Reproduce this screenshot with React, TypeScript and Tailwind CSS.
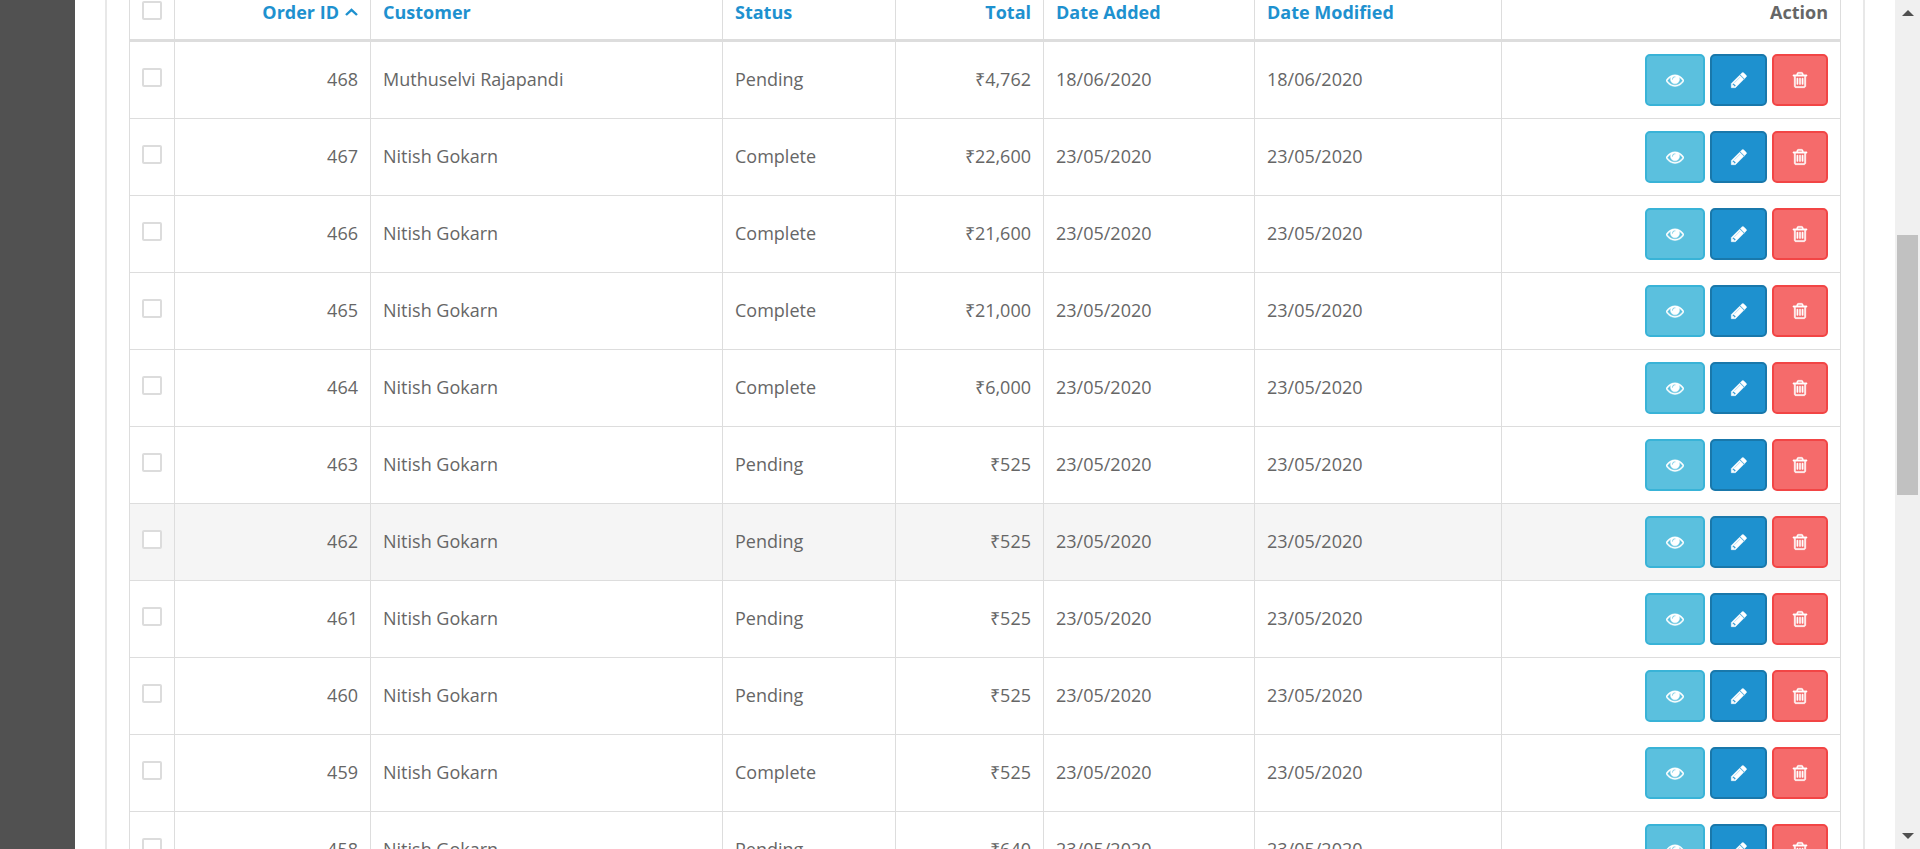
type Order = {
  id: number;
  customer: string;
  status: string;
  total: string;
  added: string;
  modified: string;
};

const nitish = (id: number, status: string, total: string): Order => ({
  id,
  customer: "Nitish Gokarn",
  status,
  total,
  added: "23/05/2020",
  modified: "23/05/2020",
});

const orders: Order[] = [
  {
    id: 468,
    customer: "Muthuselvi Rajapandi",
    status: "Pending",
    total: "₹4,762",
    added: "18/06/2020",
    modified: "18/06/2020",
  },
  nitish(467, "Complete", "₹22,600"),
  nitish(466, "Complete", "₹21,600"),
  nitish(465, "Complete", "₹21,000"),
  nitish(464, "Complete", "₹6,000"),
  nitish(463, "Pending", "₹525"),
  nitish(462, "Pending", "₹525"),
  nitish(461, "Pending", "₹525"),
  nitish(460, "Pending", "₹525"),
  nitish(459, "Complete", "₹525"),
  nitish(458, "Pending", "₹640"),
];

const activeOrder = 462;

const eyePath =
  "M1664 960q-152-236-381-353 61 104 61 225 0 185-131.5 316.5t-316.5 131.5-316.5-131.5-131.5-316.5q0-121 61-225-229 117-381 353 133 205 333.5 326.5t434.5 121.5 434.5-121.5 333.5-326.5zm-720-384q0-20-14-34t-34-14q-125 0-214.5 89.5t-89.5 214.5q0 20 14 34t34 14 34-14 14-34q0-86 61-147t147-61q20 0 34-14t14-34zm848 384q0 34-20 69-140 230-376.5 368.5t-499.5 138.5-499.5-139-376.5-368q-20-35-20-69t20-69q140-229 376.5-368t499.5-139 499.5 139 376.5 368q20 35 20 69z";
const pencilPath =
  "M491 1536l91-91-235-235-91 91v107h128v128h107zm523-928q0-22-22-22-10 0-17 7l-542 542q-7 7-7 17 0 22 22 22 10 0 17-7l542-542q7-7 7-17zm-54-192l416 416-832 832h-416v-416zm683 96q0 53-37 90l-166 166-416-416 166-165q36-38 90-38 53 0 91 38l235 234q37 39 37 91z";
const trashPath =
  "M704 736v576q0 14-9 23t-23 9h-64q-14 0-23-9t-9-23v-576q0-14 9-23t23-9h64q14 0 23 9t9 23zm256 0v576q0 14-9 23t-23 9h-64q-14 0-23-9t-9-23v-576q0-14 9-23t23-9h64q14 0 23 9t9 23zm256 0v576q0 14-9 23t-23 9h-64q-14 0-23-9t-9-23v-576q0-14 9-23t23-9h64q14 0 23 9t9 23zm128 724v-948h-896v948q0 22 7 40.5t14.5 27 10.5 8.5h832q3 0 10.5-8.5t14.5-27 7-40.5zm-672-1076h448l-48-117q-7-9-17-11h-317q-10 2-17 11zm928 32v64q0 14-9 23t-23 9h-96v948q0 83-47 143.5t-113 60.5h-832q-66 0-113-58.5t-47-141.5v-952h-96q-14 0-23-9t-9-23v-64q0-14 9-23t23-9h309l70-167q15-37 54-63t79-26h320q40 0 79 26t54 63l70 167h309q14 0 23 9t9 23z";

function Icon({ path }: { path: string }) {
  return (
    <svg viewBox="0 0 1792 1792" className="size-[18px] fill-current stroke-current stroke-[44]" aria-hidden="true">
      <path d={path} />
    </svg>
  );
}

const checkbox =
  "block h-[19px] w-5 appearance-none rounded-xs border-2 border-[#dcdcdc] bg-white checked:bg-[#1e91cf]";
const th = "border-r border-b-3 border-[#dddddd] px-3 pb-[15px] align-top font-bold";
const td = "border-r border-b border-[#dddddd] px-3";
const textCell = `${td} pt-3 pb-[14px]`;
const link = "text-[#1e91cf]";
const button = "flex h-[52px] items-center justify-center rounded-[5px] border-2 text-white";

function OrderRow({ order }: { order: Order }) {
  return (
    <tr className={order.id === activeOrder ? "bg-[#f5f5f5]" : "bg-white hover:bg-[#f5f5f5]"}>
      <td className={`${td} border-l pt-3 pb-[17px]`}>
        <input type="checkbox" aria-label={`Select order ${order.id}`} className={checkbox} />
      </td>
      <td className={`${textCell} text-right`}>{order.id}</td>
      <td className={textCell}>{order.customer}</td>
      <td className={textCell}>{order.status}</td>
      <td className={`${textCell} text-right`}>{order.total}</td>
      <td className={textCell}>{order.added}</td>
      <td className={textCell}>{order.modified}</td>
      <td className={`${td} py-3`}>
        <div className="flex justify-end gap-[5px]">
          <a href="#view" aria-label="View" className={`${button} w-[60px] border-[#39b3d7] bg-[#5bc0de]`}>
            <Icon path={eyePath} />
          </a>
          <a href="#edit" aria-label="Edit" className={`${button} w-[57px] border-[#1978ab] bg-[#1e91cf]`}>
            <Icon path={pencilPath} />
          </a>
          <button type="button" aria-label="Delete" className={`${button} w-14 border-[#f24545] bg-[#f56b6b]`}>
            <Icon path={trashPath} />
          </button>
        </div>
      </td>
    </tr>
  );
}

function Scrollbar() {
  return (
    <div className="flex w-[25px] shrink-0 flex-col items-center bg-[#f0f0f0] py-[10px]" aria-hidden="true">
      <svg viewBox="0 0 12 6" className="h-[6px] w-3 shrink-0 fill-[#505050]">
        <path d="M6 0l6 6H0z" />
      </svg>
      <div className="flex w-full grow flex-col items-center">
        <div className="grow-[219]" />
        <div className="w-[21px] grow-[260] bg-[#c1c1c1]" />
        <div className="grow-[338]" />
      </div>
      <svg viewBox="0 0 12 6" className="h-[6px] w-3 shrink-0 fill-[#505050]">
        <path d="M0 0h12L6 6z" />
      </svg>
    </div>
  );
}

export default function App() {
  return (
    <div className="flex h-screen overflow-hidden bg-white font-['Open_Sans',sans-serif] text-[18px] leading-6 text-[#666666]">
      <aside className="w-[75px] shrink-0 bg-[#515151]" />
      <main className="min-w-0 grow overflow-hidden px-[30px]">
        <div className="border-x-2 border-[#e8e8e8] px-[22px]">
          <table className="w-full table-fixed border-separate border-spacing-0">
            <colgroup>
              <col className="w-[46px]" />
              <col className="w-[196px]" />
              <col className="w-[352px]" />
              <col className="w-[173px]" />
              <col className="w-[148px]" />
              <col className="w-[211px]" />
              <col className="w-[247px]" />
              <col className="w-[339px]" />
            </colgroup>
            <thead>
              <tr>
                <th className={`${th} border-l pt-px`}>
                  <input type="checkbox" aria-label="Select all orders" className={checkbox} />
                </th>
                <th className={`${th} text-right`}>
                  <a href="#order-id" className={`${link} inline-flex items-center gap-[6px]`}>
                    Order ID
                    <svg viewBox="0 0 13 8" className="h-2 w-[13px] fill-none stroke-current stroke-[2.4]" aria-hidden="true">
                      <path d="M1 7L6.500 1.800 12 7" />
                    </svg>
                  </a>
                </th>
                <th className={`${th} text-left`}>
                  <a href="#customer" className={link}>Customer</a>
                </th>
                <th className={`${th} text-left`}>
                  <a href="#status" className={link}>Status</a>
                </th>
                <th className={`${th} text-right`}>
                  <a href="#total" className={link}>Total</a>
                </th>
                <th className={`${th} text-left`}>
                  <a href="#date-added" className={link}>Date Added</a>
                </th>
                <th className={`${th} text-left`}>
                  <a href="#date-modified" className={link}>Date Modified</a>
                </th>
                <th className={`${th} text-right`}>Action</th>
              </tr>
            </thead>
            <tbody>
              {orders.map((order) => (
                <OrderRow key={order.id} order={order} />
              ))}
            </tbody>
          </table>
        </div>
      </main>
      <Scrollbar />
    </div>
  );
}
